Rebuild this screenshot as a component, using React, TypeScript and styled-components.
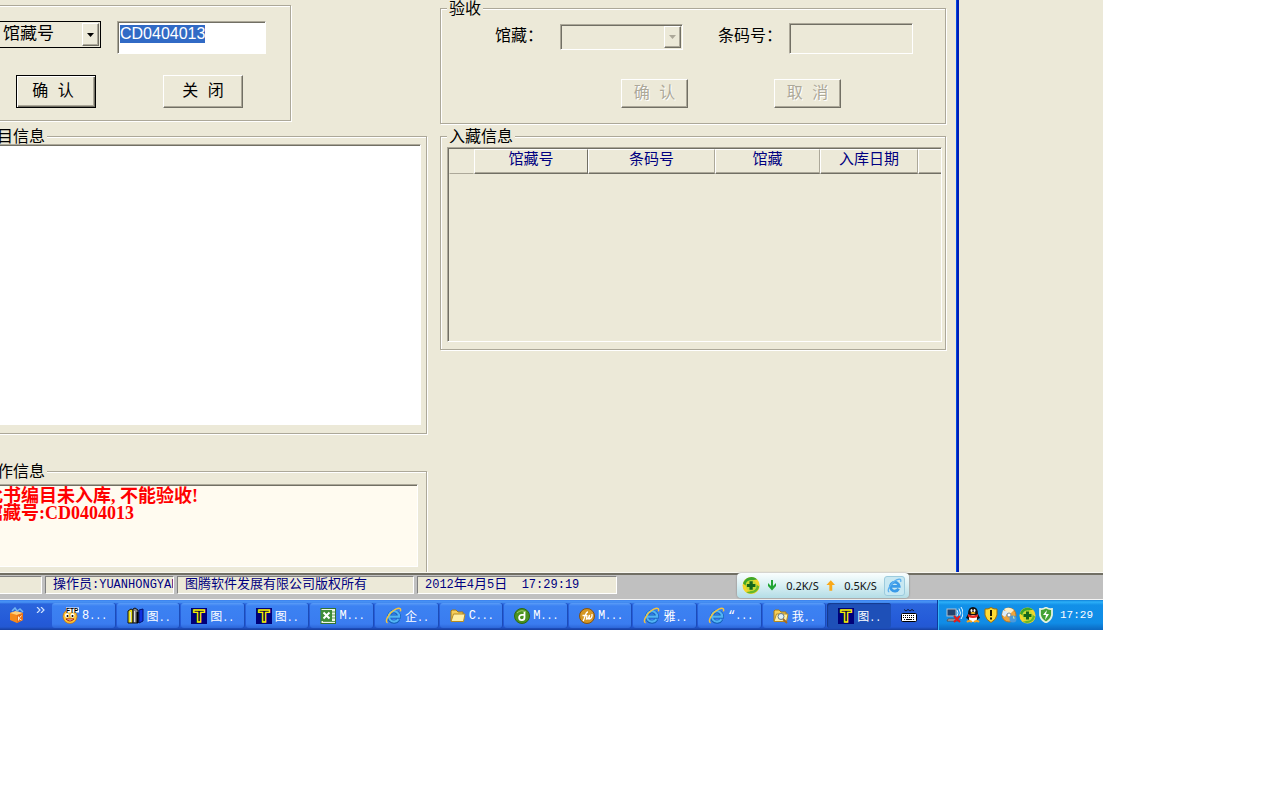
import React, { useEffect, useRef } from 'react';
import styled, { createGlobalStyle, css } from 'styled-components';

const face = '#ece9d8';
const shadow = '#aca899';
const dark = '#716f64';
const navy = '#000080';

const GlobalStyle = createGlobalStyle`
  * { box-sizing: border-box; }
  body {
    margin: 0;
    background: #fff;
    color: #000;
    font-family: 'Liberation Mono', 'Noto Sans CJK SC', monospace;
    font-size: 16px;
    overflow-x: hidden;
  }
  button, input, select, textarea { font: inherit; border-radius: 0; margin: 0; outline: none; }
`;

const Desktop = styled.div`
  padding-right: 177px;
`;

const Workspace = styled.main`
  display: flex;
  background: ${face};
  overflow: hidden;
`;

const Dialog = styled.div`
  flex: 1;
  min-width: 0;
  display: flex;
  gap: 13px;
  padding-right: 10px;
`;

const DialogEdge = styled.div`
  width: 147px;
  border-left: 1px solid #0046e6;
  box-shadow: inset 2px 0 0 #001eb4;
`;

const LeftColumn = styled.div`
  width: 455px;
  margin-left: -28px;
  padding-top: 5px;
`;

const RightColumn = styled.div`
  flex: 1;
  min-width: 0;
  padding-top: 1px;
`;

const Group = styled.fieldset<{ $cut?: boolean; $top?: number }>`
  min-width: 0;
  margin: ${(p) => p.$top ?? 0}px 0 0;
  padding: 0;
  border: 1px solid ${shadow};
  box-shadow: 1px 1px 0 #fff, inset 1px 1px 0 #fff;
  ${(p) => p.$cut && css`border-bottom: 0;`}
`;

const SearchGroup = styled(Group)`
  width: 319px;
  height: 116px;
  padding-top: 15px;
`;

const GroupBody = styled.div<{ $pad: string }>`
  padding: ${(p) => p.$pad};
`;

const Legend = styled.legend`
  height: 15px;
  margin-left: 6px;
  padding: 0 2px;
  line-height: 18px;
  background: ${face};
`;

const Row = styled.div<{ $indent: number; $gap: number; $top?: number }>`
  display: flex;
  align-items: flex-start;
  gap: ${(p) => p.$gap}px;
  margin-top: ${(p) => p.$top ?? 0}px;
  padding-left: ${(p) => p.$indent}px;
`;

const sunken = css`
  border: 1px solid;
  border-color: ${shadow} #fff #fff ${shadow};
  box-shadow: inset 1px 1px 0 ${dark};
`;

const raised = css`
  background: ${face};
  border: 1px solid;
  border-color: #fff ${dark} ${dark} #fff;
  box-shadow: inset -1px -1px 0 ${shadow};
`;

const Button = styled.button<{ $small?: boolean; $default?: boolean }>`
  ${raised}
  width: ${(p) => (p.$small ? 67 : 80)}px;
  height: ${(p) => (p.$small ? 29 : 33)}px;
  padding: 0;
  line-height: 16px;
  ${(p) => p.$default && css`
    padding-right: 6px;
    border-color: #000;
    box-shadow: inset 1px 1px 0 #fff, inset -1px -1px 0 ${dark}, inset -2px -2px 0 ${shadow};
  `}
  &:disabled {
    color: ${shadow};
    text-shadow: 1px 1px 0 #fff;
  }
`;

const TextInput = styled.input<{ $width: number; $height: number }>`
  ${sunken}
  width: ${(p) => p.$width}px;
  height: ${(p) => p.$height}px;
  padding: 2px 2px 10px;
  font-family: 'Liberation Sans', sans-serif;
  background: #fff;
  &::selection { background: #316ac5; color: #fff; }
  &:disabled { background: ${face}; }
`;

const SelectBox = styled.span<{ $width: number; $height: number; $flat?: boolean }>`
  position: relative;
  display: flex;
  width: ${(p) => p.$width}px;
  height: ${(p) => p.$height}px;
  ${(p) => (p.$flat ? css`border: 1px solid #000;` : css`${sunken} margin-top: 1px;`)}
  select {
    appearance: none;
    width: 100%;
    border: 0;
    padding: 1px 0 0 14px;
    font-size: 17px;
    line-height: 20px;
    color: #000;
    background: transparent;
  }
`;

const DropArrow = styled.span<{ $muted?: boolean }>`
  ${raised}
  position: absolute;
  top: 1px;
  right: 1px;
  bottom: 1px;
  width: 17px;
  display: flex;
  align-items: center;
  justify-content: center;
  pointer-events: none;
  color: ${(p) => (p.$muted ? shadow : '#000')};
`;

const FieldLabel = styled.label<{ $after: number }>`
  line-height: 29px;
  margin-right: ${(p) => p.$after}px;
  white-space: nowrap;
`;

const Memo = styled.textarea<{ $height: number; $message?: boolean }>`
  ${sunken}
  display: block;
  width: 100%;
  height: ${(p) => p.$height}px;
  padding: 3px;
  resize: none;
  overflow: hidden;
  background: #fff;
  ${(p) => p.$message && css`
    background: #fffbf0;
    color: #f00;
    font: bold 18px/17px 'Liberation Serif', 'Noto Sans CJK SC', serif;
  `}
`;

const GridFrame = styled.div`
  ${sunken}
  height: 195px;
  padding: 1px 0 0 1px;
`;

const Grid = styled.table`
  width: 100%;
  table-layout: fixed;
  border-collapse: separate;
  border-spacing: 0;
  color: ${navy};
  font-size: 15px;
  th {
    height: 25px;
    padding: 0 0 1px;
    line-height: 18px;
    font-weight: normal;
    border: 1px solid;
    border-color: #fff ${shadow} ${dark} #fff;
    box-shadow: inset 0 -1px 0 ${shadow};
    overflow: hidden;
    white-space: nowrap;
  }
  th:first-child {
    border-color: ${face} ${face} ${shadow} ${face};
    box-shadow: none;
  }
  th:nth-child(2) { border-right-color: ${dark}; }
  th:last-child { border-right: 0; }
`;

const Col = styled.col<{ $width?: number }>`
  width: ${(p) => (p.$width ? `${p.$width}px` : 'auto')};
`;

const StatusBar = styled.footer`
  position: relative;
  display: flex;
  align-items: flex-start;
  gap: 3px;
  height: 27px;
  padding-top: 1px;
  background: #c0c0c0;
  border-top: 2px solid ${dark};
  border-bottom: 1px solid #f4f4f4;
  box-shadow: 0 -1px 0 #f8f7f0;
`;

const StatusCell = styled.div<{ $width: number }>`
  width: ${(p) => p.$width}px;
  height: 18px;
  padding-left: 7px;
  overflow: hidden;
  white-space: pre;
  color: ${navy};
  background: ${face};
  border: 1px solid;
  border-color: #808080 #fff #fff #808080;
  font-size: 13px;
  line-height: 16px;
  &:first-child { border-left: 0; }
`;

const Latin = styled.span`
  font-size: 12px;
`;

const SpeedWidget = styled.aside`
  position: absolute;
  right: 194px;
  top: -2px;
  display: flex;
  align-items: center;
  width: 172px;
  height: 25px;
  padding: 0 4px 0 5px;
  border-radius: 4px;
  background: linear-gradient(#fafefe, #d8eff3 50%, #b4dde6);
  box-shadow: 0 0 2px #777;
  font: 11px 'Noto Sans', sans-serif;
  color: #111;
`;

const Speed = styled.span`
  width: 33px;
  margin: 0 7px 0 9px;
  white-space: nowrap;
`;

const WidgetButton = styled.button`
  display: flex;
  align-items: center;
  justify-content: center;
  width: 22px;
  height: 20px;
  padding: 0;
  border: 1px solid #9ccbdd;
  border-radius: 3px;
  background: #c8e8f2;
`;

const Taskbar = styled.nav`
  display: flex;
  height: 30px;
  background: linear-gradient(#3a80ee 0, #4a96f6 2px, #2a64dc 4px, #245ad8 22px, #2358d2 27px, #173f9e 30px);
  color: #fff;
  font-size: 12px;
`;

const QuickLaunch = styled.div`
  display: flex;
  width: 52px;
  padding: 7px 0 0 9px;
  gap: 11px;
`;

const TaskList = styled.div`
  flex: 1;
  min-width: 0;
  display: flex;
  padding-top: 3px;
`;

const TaskButton = styled.button<{ $active?: boolean }>`
  flex: 1;
  min-width: 0;
  display: flex;
  align-items: center;
  gap: 3px;
  height: 25px;
  margin-right: 2px;
  padding: 0 2px 0 10px;
  overflow: hidden;
  white-space: nowrap;
  color: #fff;
  border: 0;
  border-radius: 3px;
  background: linear-gradient(#5a9cf8 0, #3c82f2 3px, #3a7cf0 21px, #2c66d8 25px);
  box-shadow: 1px 0 0 #1c4cb8;
  svg { flex: none; }
  ${(p) => p.$active && css`
    padding-left: 11px;
    background: #1e50b8;
    box-shadow: inset 1px 1px 1px #143a8c;
  `}
`;

const Dots = styled.span`
  font-size: 10px;
`;

const LanguageBar = styled.div`
  width: 44px;
  padding: 9px 0 0 8px;
`;

const Tray = styled.div`
  display: flex;
  align-items: center;
  gap: 2px;
  width: 166px;
  padding-left: 8px;
  border-left: 1px solid #0c3c9c;
  box-shadow: inset 1px 0 0 #34b4f8;
  background: linear-gradient(#1080d8 0, #2cb0f8 2px, #1290e8 5px, #108ce6 23px, #0c68c0 30px);
`;

const Clock = styled.time`
  margin-left: 4px;
  font-size: 11px;
`;

const Triangle = () => (
  <svg width="7" height="4" viewBox="0 0 7 4" aria-hidden="true"><path d="M0 0h7L3.5 4z" fill="currentColor" /></svg>
);

const FtpIcon = () => (
  <svg width="17" height="17" viewBox="0 0 17 17">
    <circle cx="8" cy="9.5" r="7" fill="#fdc532" stroke="#c46a10" strokeWidth=".7" />
    <ellipse cx="5" cy="8.5" rx="2" ry="2.3" fill="#fff" /><ellipse cx="10.5" cy="8.5" rx="2" ry="2.3" fill="#fff" />
    <circle cx="5.5" cy="9" r="1" /><circle cx="10.5" cy="9" r="1" />
    <path d="M4 12q4 4 8 0z" fill="#fff" stroke="#a8200c" />
    <path d="M4 .5h13v5H4z" fill="#fff" />
    <text x="4" y="5.5" fontSize="6.5" fontWeight="bold" fontFamily="Liberation Sans">FTP</text>
  </svg>
);

const BooksIcon = () => (
  <svg width="17" height="17" viewBox="0 0 17 17">
    <path d="M1 4l3-2 2 1v13H1z" fill="#e4dc18" stroke="#111" />
    <path d="M6 2l2-1 3 2v13H6z" fill="#888" stroke="#111" />
    <path d="M7.5 4v11M3.5 5v10" stroke="#ddd" /><path d="M12 3l4-1v12l-4 2z" fill="#1030e0" stroke="#00106c" />
    <path d="M10.5 5v11" stroke="#000" strokeWidth="2" />
  </svg>
);

const TIcon = () => (
  <svg width="16" height="16" viewBox="0 0 16 16">
    <rect width="16" height="16" fill="#000078" />
    <text x="8" y="14" textAnchor="middle" fontSize="16" fontWeight="bold" fontFamily="DejaVu Sans" fill="#000040" stroke="#f8f000" strokeWidth="1.3">T</text>
  </svg>
);

const ExcelIcon = () => (
  <svg width="16" height="16" viewBox="0 0 16 16">
    <rect x="1" y=".5" width="14.5" height="15" fill="#edf5e7" stroke="#34752f" />
    <path d="M11 4h4M11 7h4M11 10h4M3 13.5h12" stroke="#5a9b51" />
    <rect x="1" y="2" width="11" height="11" fill="#3f8d37" />
    <path d="M3.5 4.5l6 6M9.5 4.5l-6 6" stroke="#fff" strokeWidth="2" />
  </svg>
);

const IEIcon = ({ size = 17 }: { size?: number }) => (
  <svg width={size} height={size} viewBox="0 0 17 17">
    <path d="M13.6 12.2A5.2 5.2 0 1 1 14.2 9.6H4.5" fill="none" stroke="#1460b8" strokeWidth="3.6" />
    <path d="M13.4 12.2A5.2 5.2 0 1 1 14.2 9.6H4.5" fill="none" stroke="#52b4f4" strokeWidth="2.2" />
    <path d="M2.6 15.8C-1 15 4 5.5 10.8 2.2c4.4-2 5.4-.4 4.6 2.2" fill="none" stroke="#f6c43c" strokeWidth="1.4" />
  </svg>
);

const BlueBrowserIcon = () => (
  <svg width="15" height="15" viewBox="0 0 17 17">
    <path d="M13.2 12.2A5 5 0 1 1 13.8 9.4H4.5" fill="none" stroke="#3a9ae8" strokeWidth="3.2" />
    <path d="M2.6 15.8C-1 15 4 5.5 10.8 2.2c4.4-2 5.4-.4 4.6 2.2" fill="none" stroke="#5cb0f0" strokeWidth="1.5" />
  </svg>
);

const FolderIcon = ({ search }: { search?: boolean }) => (
  <svg width="16" height="16" viewBox="0 0 16 16">
    <path d="M1 13V3l1-1h4l2 2h5v9z" fill="#f5ce59" stroke="#a67b18" />
    <path d="M1 13.5L3.5 6H15l-1.5 7.5z" fill="#fff0a5" stroke="#b58a22" />
    {search && <><circle cx="8" cy="8.5" r="3" fill="#dcf1fa" stroke="#687880" /><path d="M10 11l4 4" stroke="#a66a20" strokeWidth="2" /></>}
  </svg>
);

const GreenDiscIcon = () => (
  <svg width="16" height="16" viewBox="0 0 16 16">
    <circle cx="8" cy="8" r="7.5" fill="#4b9220" stroke="#2e6912" />
    <path d="M10.5 3.5v6a2.7 2.7 0 1 1-2.7-2.7h2.7" fill="none" stroke="#fff" strokeWidth="1.8" />
    <path d="M3 5q4-4 9-1" fill="none" stroke="#9dce6b" />
  </svg>
);

const GoldDiscIcon = () => (
  <svg width="16" height="16" viewBox="0 0 16 16">
    <circle cx="8" cy="8" r="7.5" fill="#d49624" stroke="#855210" />
    <path d="M4 13c2-2 2-9 5-9M3.5 7.5H8M8 7l-.5 4c2 0 3-4 3-4l-.5 4c2 0 3.5-2 3-5" fill="none" stroke="#fff" strokeWidth="1.3" />
  </svg>
);

const BoxIcon = () => (
  <svg width="16" height="16" viewBox="0 0 16 16">
    <path d="M1 6l6-2 7 2v7l-6 3-7-3z" fill="#f48a1c" /><path d="M1 6l6-2 7 2-6 2z" fill="#ffd07c" />
    <path d="M8 8v8l6-3V6z" fill="#e87018" /><path d="M3 4l3-3 2 3 3-2 3 3" fill="none" stroke="#74b6f0" strokeWidth="1.5" />
    <path d="M9.5 9.5v4M12.5 8.5l-2.5 3 2.5 1.5" fill="none" stroke="#fff0cf" />
  </svg>
);

const ChevronsIcon = () => (
  <svg width="9" height="6" viewBox="0 0 9 6"><path d="M1 0l3 3-3 3M5 0l3 3-3 3" fill="none" stroke="#cfe2ff" strokeWidth="1.2" /></svg>
);

const KeyboardIcon = () => (
  <svg width="16" height="13" viewBox="0 0 16 13">
    <path d="M3 .5l2 1.5 2-1.5 2 1.5 2-1.5 2 1.5" fill="none" stroke="#071435" /><rect x=".5" y="4.5" width="15" height="8" rx="1" fill="#fff" stroke="#000" />
    <path d="M2 6.5h12M2 8.5h12" stroke="#000" strokeDasharray="1 1" /><path d="M3 10.5h10" stroke="#000" strokeDasharray="1 1 6 1" />
  </svg>
);

const PlusBallIcon = ({ size }: { size: number }) => (
  <svg width={size} height={size} viewBox="0 0 18 18">
    <circle cx="9" cy="9" r="8.5" fill="#f4d52a" /><path d="M1 7A8.5 8.5 0 0 1 15 3Q7 3 5 10z" fill="#3da72b" />
    <path d="M17 10A8.5 8.5 0 0 1 4 15.5Q12 15 14 8z" fill="#66b82a" />
    <circle cx="9" cy="9" r="5.5" fill="#c8dc34" />
    <path d="M9 4.8v8.4M4.8 9h8.4" stroke="#14671c" strokeWidth="3.2" />
  </svg>
);

const ArrowIcon = ({ up }: { up?: boolean }) => (
  <svg width="10" height="11" viewBox="0 0 10 11">
    {up ? <path d="M5 0l4.5 5H6.5v6h-3V5h-3z" fill="#f9a918" /> : <path d="M4 0h2v6l3-3v3L5 10.5 1 6V3l3 3z" fill="#22a534" />}
  </svg>
);

const NetworkIcon = () => (
  <svg width="17" height="16" viewBox="0 0 17 16">
    <rect x="1" y="2" width="9" height="7" fill="#23446f" stroke="#b2c2d0" /><path d="M2 12h8l2 2H1z" fill="#c1ccd5" stroke="#555" />
    <path d="M11 3q2 3 0 6M13 1.5q3 4.5 0 9M15 0q4 6 0 12" fill="none" stroke="#e1f3ff" />
    <path d="M8 9l6 6M14 9l-6 6" stroke="#e51a19" strokeWidth="2" />
  </svg>
);

const PenguinIcon = () => (
  <svg width="16" height="16" viewBox="0 0 16 16">
    <path d="M3 7q0-7 5-7t5 7l2 4-2 1q-1 3-5 3t-5-3l-2-1z" fill="#111" /><ellipse cx="8" cy="11.5" rx="4" ry="3.5" fill="#fff" />
    <ellipse cx="6.5" cy="3.5" rx="1" ry="1.6" fill="#fff" /><ellipse cx="9.5" cy="3.5" rx="1" ry="1.6" fill="#fff" />
    <ellipse cx="8" cy="6" rx="2.5" ry="1" fill="#f5b51b" /><path d="M3 7q5 3 10 0v2.5q-5 3-10 0z" fill="#e82821" />
    <path d="M2 15q2-2 5 0M9 15q3-2 5 0" stroke="#f7a51c" strokeWidth="2" />
  </svg>
);

const ShieldIcon = ({ green }: { green?: boolean }) => (
  <svg width="16" height="16" viewBox="0 0 16 16">
    <path d="M8 .5q3 2 6 1.5v6q-1 5-6 7.5Q3 13 2 8V2q3 .5 6-1.5z" fill={green ? '#43a234' : '#ffdb35'} stroke={green ? '#e4f2e0' : '#a06e08'} strokeWidth={green ? 1.8 : 1} />
    {green ? <path d="M9 3L5 8h3l-1 5 4-6H8z" fill="#fff" /> : <path d="M8 3v6M8 10.5v2" stroke="#201800" strokeWidth="2" />}
  </svg>
);

const DiscIcon = () => (
  <svg width="16" height="16" viewBox="0 0 16 16">
    <circle cx="8" cy="8" r="7" fill="#efa53c" stroke="#bb7726" /><path d="M8 8L3 2q5-3 10 1z" fill="#fff0c6" />
    <path d="M2 3l5 2-3 5-3-2z" fill="#dcecfb" /><circle cx="8" cy="8" r="2" fill="#fff" stroke="#718ba2" />
    <circle cx="12" cy="12" r="3.5" fill="#4b99db" /><path d="M12 8.5l2 3h-2z" fill="#c3e7a6" />
  </svg>
);

const tasks: { icon: React.ReactNode; text: string; dots: string }[] = [
  { icon: <FtpIcon />, text: '8', dots: '...' },
  { icon: <BooksIcon />, text: '图', dots: '..' },
  { icon: <TIcon />, text: '图', dots: '..' },
  { icon: <TIcon />, text: '图', dots: '..' },
  { icon: <ExcelIcon />, text: 'M', dots: '...' },
  { icon: <IEIcon />, text: '企', dots: '..' },
  { icon: <FolderIcon />, text: 'C', dots: '...' },
  { icon: <GreenDiscIcon />, text: 'M', dots: '...' },
  { icon: <GoldDiscIcon />, text: 'M', dots: '...' },
  { icon: <IEIcon />, text: '雅', dots: '..' },
  { icon: <IEIcon />, text: '“', dots: '...' },
  { icon: <FolderIcon search />, text: '我', dots: '..' },
  { icon: <TIcon />, text: '图', dots: '..' },
];

export default function App() {
  const codeRef = useRef<HTMLInputElement>(null);
  useEffect(() => {
    codeRef.current?.focus();
    codeRef.current?.select();
  }, []);

  return (
    <Desktop>
      <GlobalStyle />
      <Workspace>
        <Dialog>
          <LeftColumn>
            <SearchGroup>
              <Row $indent={15} $gap={16}>
                <SelectBox $width={113} $height={27} $flat>
                  <select aria-label="检索方式"><option>馆藏号</option></select>
                  <DropArrow><Triangle /></DropArrow>
                </SelectBox>
                <TextInput ref={codeRef} $width={149} $height={33} aria-label="馆藏号" defaultValue="CD0404013" />
              </Row>
              <Row $indent={43} $gap={67} $top={21}>
                <Button type="button" $default>确 认</Button>
                <Button type="button">关 闭</Button>
              </Row>
            </SearchGroup>
            <Group $top={8}>
              <Legend>编目信息</Legend>
              <GroupBody $pad="0 5px 8px">
                <Memo $height={281} aria-label="编目信息" readOnly />
              </GroupBody>
            </Group>
            <Group $cut $top={30}>
              <Legend>操作信息</Legend>
              <GroupBody $pad="5px 8px 6px">
                <Memo $height={83} $message aria-label="操作信息" readOnly value={'此书编目未入库, 不能验收!\n馆藏号:CD0404013'} />
              </GroupBody>
            </Group>
          </LeftColumn>
          <RightColumn>
            <Group>
              <Legend>验收</Legend>
              <GroupBody $pad="7px 0 15px">
                <Row $indent={54} $gap={0}>
                  <FieldLabel htmlFor="holding" $after={17}>馆藏：</FieldLabel>
                  <SelectBox $width={123} $height={26}>
                    <select id="holding" disabled><option></option></select>
                    <DropArrow $muted><Triangle /></DropArrow>
                  </SelectBox>
                  <Row as="span" $indent={35} $gap={0}>
                    <FieldLabel htmlFor="barcode" $after={7}>条码号：</FieldLabel>
                    <TextInput id="barcode" $width={124} $height={31} disabled />
                  </Row>
                </Row>
                <Row $indent={180} $gap={86} $top={25}>
                  <Button type="button" $small disabled>确 认</Button>
                  <Button type="button" $small disabled>取 消</Button>
                </Row>
              </GroupBody>
            </Group>
            <Group $top={5}>
              <Legend>入藏信息</Legend>
              <GroupBody $pad="3px 3px 7px 6px">
                <GridFrame>
                  <Grid>
                    <colgroup>
                      <Col $width={25} /><Col $width={114} /><Col $width={127} /><Col $width={105} /><Col $width={98} /><Col />
                    </colgroup>
                    <thead>
                      <tr><th /><th>馆藏号</th><th>条码号</th><th>馆藏</th><th>入库日期</th><th /></tr>
                    </thead>
                  </Grid>
                </GridFrame>
              </GroupBody>
            </Group>
          </RightColumn>
        </Dialog>
        <DialogEdge />
      </Workspace>
      <StatusBar>
        <StatusCell $width={42} />
        <StatusCell $width={129}>操作员<Latin>:YUANHONGYAN</Latin></StatusCell>
        <StatusCell $width={237}>图腾软件发展有限公司版权所有</StatusCell>
        <StatusCell $width={200}>
          <Latin>2012</Latin>年<Latin>4</Latin>月<Latin>5</Latin>日<Latin>{'  17:29:19'}</Latin>
        </StatusCell>
        <SpeedWidget>
          <PlusBallIcon size={19} />
          <Row as="span" $indent={7} $gap={0}><ArrowIcon /></Row>
          <Speed>0.2K/S</Speed>
          <ArrowIcon up />
          <Speed>0.5K/S</Speed>
          <WidgetButton type="button" aria-label="浏览器"><BlueBrowserIcon /></WidgetButton>
        </SpeedWidget>
      </StatusBar>
      <Taskbar>
        <QuickLaunch><BoxIcon /><ChevronsIcon /></QuickLaunch>
        <TaskList>
          {tasks.map((task, i) => (
            <TaskButton type="button" key={i} $active={i === tasks.length - 1}>
              {task.icon}
              <span>{task.text}<Dots>{task.dots}</Dots></span>
            </TaskButton>
          ))}
        </TaskList>
        <LanguageBar><KeyboardIcon /></LanguageBar>
        <Tray>
          <NetworkIcon /><PenguinIcon /><ShieldIcon /><DiscIcon /><PlusBallIcon size={17} /><ShieldIcon green />
          <Clock>17:29</Clock>
        </Tray>
      </Taskbar>
    </Desktop>
  );
}
